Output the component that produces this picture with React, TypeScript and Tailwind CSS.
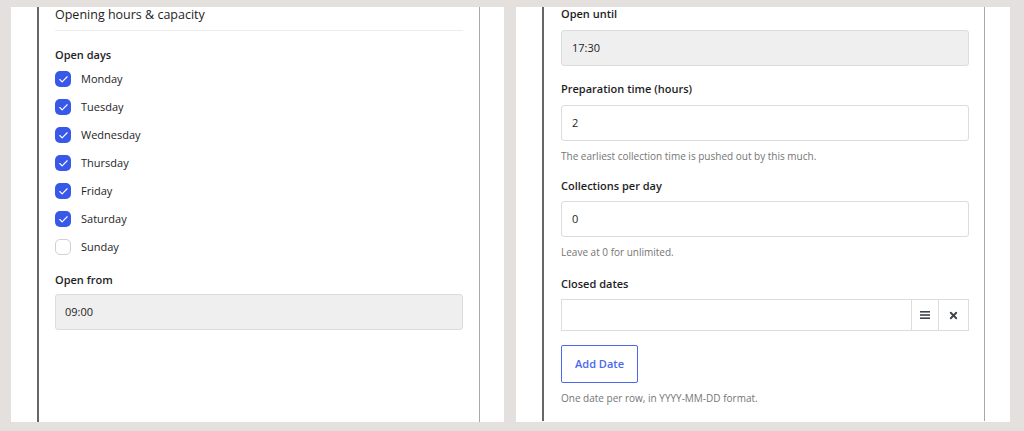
import { Check, X } from 'lucide-react'

const days = [
  { name: 'Monday', on: true },
  { name: 'Tuesday', on: true },
  { name: 'Wednesday', on: true },
  { name: 'Thursday', on: true },
  { name: 'Friday', on: true },
  { name: 'Saturday', on: true },
  { name: 'Sunday', on: false },
]

function Label({ children, className = '' }: { children: React.ReactNode; className?: string }) {
  return <div className={`text-[11px] leading-5 font-semibold text-[#1e1e1e] ${className}`}>{children}</div>
}

function Help({ children, className = '' }: { children: React.ReactNode; className?: string }) {
  return <div className={`text-[10px] leading-4 text-[#757575] ${className}`}>{children}</div>
}

function Field({ value, disabled, className = '' }: { value: string; disabled?: boolean; className?: string }) {
  return (
    <div
      className={`h-9 flex items-center px-[10px] rounded-[3px] border text-[11px] text-[#1e1e1e] ${
        disabled ? 'bg-[#efefef] border-[#dcdcdc]' : 'bg-white border-[#dcdcdc]'
      } ${className}`}
    >
      {value}
    </div>
  )
}

export default function App() {
  return (
    <div
      className="w-[1024px] h-[431px] bg-[#e4e0de] flex gap-3 pl-[11px] pt-[7px] pb-[9px] overflow-hidden"
      style={{ fontFamily: '"Open Sans", "Noto Sans", sans-serif' }}
    >
      {/* left panel */}
      <div className="w-[493px] h-full bg-white pl-[26px] overflow-hidden">
        <div className="w-[443px] h-full border-l-2 border-l-[#666] border-r border-r-[#a8a8a8] px-4">
          <div className="text-[12.5px] leading-4 font-medium text-[#1e1e1e] pb-[7px] border-b border-[#ececec]">
            Opening hours &amp; capacity
          </div>
          <Label className="mt-[14px]">Open days</Label>
          <div className="flex flex-col">
            {days.map((d) => (
              <div key={d.name} className="h-7 flex items-center gap-[10px]">
                {d.on ? (
                  <span className="w-4 h-4 rounded-[5px] bg-[#3858e9] flex items-center justify-center">
                    <Check size={11} strokeWidth={2.5} className="text-white" />
                  </span>
                ) : (
                  <span className="w-4 h-4 rounded-[5px] border border-[#d0d0d0] bg-white" />
                )}
                <span className="text-[11px] text-[#1e1e1e]">{d.name}</span>
              </div>
            ))}
          </div>
          <Label className="mt-[9px]">Open from</Label>
          <Field value="09:00" disabled className="mt-1 pl-[9px]" />
        </div>
      </div>

      {/* right panel */}
      <div className="w-[494px] h-full bg-white pl-[26px] overflow-hidden">
        <div className="w-[443px] h-full border-l-2 border-l-[#666] border-r border-r-[#a8a8a8] pl-[17px] pr-[15px]">
          <div className="text-[11px] leading-4 font-semibold text-[#1e1e1e] -mt-px">Open until</div>
          <Field value="17:30" disabled className="mt-2" />

          <Label className="mt-[13px]">Preparation time (hours)</Label>
          <Field value="2" className="mt-[6px]" />
          <Help className="mt-[7px]">The earliest collection time is pushed out by this much.</Help>

          <Label className="mt-3">Collections per day</Label>
          <Field value="0" className="mt-[5px]" />
          <Help className="mt-[7px]">Leave at 0 for unlimited.</Help>

          <Label className="mt-[14px]">Closed dates</Label>
          <div className="mt-[5px] h-8 flex border border-[#dcdcdc]">
            <div className="flex-1" />
            <div className="w-[27px] border-l border-[#dcdcdc] flex items-center justify-center">
              <svg width="10" height="8" viewBox="0 0 10 8" fill="#3c434a">
                <rect x="0" y="0" width="10" height="1.6" />
                <rect x="0" y="3.2" width="10" height="1.6" />
                <rect x="0" y="6.4" width="10" height="1.6" />
              </svg>
            </div>
            <div className="w-[30px] border-l border-[#dcdcdc] flex items-center justify-center">
              <X size={11} strokeWidth={4} className="text-[#3c434a]" />
            </div>
          </div>

          <button className="mt-[14px] h-[38px] w-[77px] border border-[#4a67ee] rounded-[2px] text-[11px] font-semibold text-[#4a67ee] bg-white">
            Add Date
          </button>
          <Help className="mt-[7px]">One date per row, in YYYY-MM-DD format.</Help>
        </div>
      </div>
    </div>
  )
}
